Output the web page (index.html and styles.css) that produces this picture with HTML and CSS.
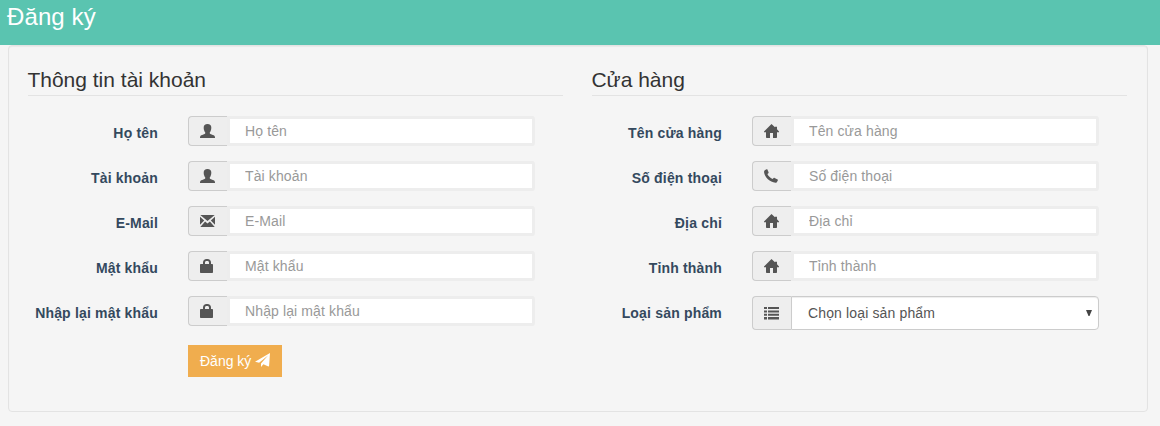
FILE: index.html
```html
<!DOCTYPE html>
<html lang="vi">
<head>
<meta charset="utf-8">
<title>Đăng ký</title>
<link rel="stylesheet" href="styles.css">
</head>
<body>
<svg class="sprite" aria-hidden="true">
  <symbol id="user" viewBox="0 0 15 14"><path d="M7.500 0C10 0 11.300 1.500 11.300 3.500c0 1.200-.1 1.900-.5 2.900-.3.900-.6 1.500-1 1.900v1.200c.2.500.9.700 1.900 1.100 1.600.6 2.800 1 3.100 1.900.2.500.2 1 .2 1.500H0c0-.5 0-1 .2-1.500.3-.9 1.500-1.300 3.100-1.900 1-.4 1.700-.6 1.900-1.100V8.300c-.4-.4-.7-1-1-1.900-.4-1-.5-1.700-.5-2.900C3.700 1.500 5 0 7.500 0z"/></symbol>
  <symbol id="mail" viewBox="0 0 15 14"><path d="M.3 1h14.400L7.500 7zM0 2.800l4.200 3.700L0 10.700zM15 2.800v7.900l-4.200-4.200zM5.100 7.500l2.400 2 2.400-2 4.800 5.500H.3z"/></symbol>
  <symbol id="lock" viewBox="0 0 15 14"><path fill-rule="evenodd" d="M3 5V3.500C3 1.300 4.500 0 6.500 0h1C9.500 0 11 1.300 11 3.500V5h1.200c.5 0 .8.3.8.800V13c0 .6-.4 1-1 1H1c-.6 0-1-.4-1-1V5.800C0 5.300.3 5 .8 5zm2 0h4V3.700C9 2.600 8.400 2 7.400 2h-.8C5.600 2 5 2.600 5 3.700z"/></symbol>
  <symbol id="home" viewBox="0 0 15 14"><path d="M7.500 0L11 3.300V2.800h2v2.500L15 7.400v.8h-2v5.100c0 .4-.3.700-.7.700H9V9H6v5H2.700c-.4 0-.7-.3-.7-.7V8.200H0v-.8z"/></symbol>
  <symbol id="phone" viewBox="0 0 15 14"><path d="M1.100 1L2.600.3c.3-.2.700 0 .8.300l1.200 2.700c.1.400 0 .7-.2.900l-1 .9c.8 1.900 2.900 3.900 5.100 4.900l1.200-1c.2-.2.600-.3.900-.1l3 1.500c.3.200.4.500.3.800l-.8 1.500c-.3.700-.9 1.200-1.600 1.100C5.800 13 .8 8.300.1 3.500 0 2.400.2 1.400 1.100 1z"/></symbol>
  <symbol id="list" viewBox="0 0 15 14"><path d="M0 1h3v2H0zm4 0h11v2H4zM0 4.400h3v2.100H0zm4 0h11v2.100H4zM0 7.700h3v2.100H0zm4 0h11v2.100H4zM0 11h3v2.500H0zm4 0h11v2.500H4z"/></symbol>
  <symbol id="send" viewBox="0 0 15 14"><path d="M15 0L0 8.700l4.100 1.100L13 2.500 6 10.500V14l2.400-2.700 5 2.100q.6 0 .7-.7z"/></symbol>
</svg>
<header class="topbar"><h1 class="title">Đăng ký</h1></header>
<form class="well">
  <section class="column">
    <h2 class="legend">Thông tin tài khoản</h2>
    <div class="row"><label class="label" for="name">Họ tên</label><div class="group"><span class="addon"><svg class="icon"><use href="#user"/></svg></span><input class="field" id="name" placeholder="Họ tên"></div></div>
    <div class="row"><label class="label" for="account">Tài khoản</label><div class="group"><span class="addon"><svg class="icon"><use href="#user"/></svg></span><input class="field" id="account" placeholder="Tài khoản"></div></div>
    <div class="row"><label class="label" for="email">E-Mail</label><div class="group"><span class="addon"><svg class="icon"><use href="#mail"/></svg></span><input class="field" id="email" placeholder="E-Mail"></div></div>
    <div class="row"><label class="label" for="pass">Mật khẩu</label><div class="group"><span class="addon"><svg class="icon"><use href="#lock"/></svg></span><input class="field" id="pass" type="password" placeholder="Mật khẩu"></div></div>
    <div class="row"><label class="label" for="pass2">Nhập lại mật khẩu</label><div class="group"><span class="addon"><svg class="icon"><use href="#lock"/></svg></span><input class="field" id="pass2" type="password" placeholder="Nhập lại mật khẩu"></div></div>
    <button class="submit" type="button">Đăng ký <svg class="icon"><use href="#send"/></svg></button>
  </section>
  <section class="column">
    <h2 class="legend">Cửa hàng</h2>
    <div class="row"><label class="label" for="shop">Tên cửa hàng</label><div class="group"><span class="addon"><svg class="icon"><use href="#home"/></svg></span><input class="field" id="shop" placeholder="Tên cửa hàng"></div></div>
    <div class="row"><label class="label" for="tel">Số điện thoại</label><div class="group"><span class="addon"><svg class="icon"><use href="#phone"/></svg></span><input class="field" id="tel" placeholder="Số điện thoại"></div></div>
    <div class="row"><label class="label" for="address">Địa chỉ</label><div class="group"><span class="addon"><svg class="icon"><use href="#home"/></svg></span><input class="field" id="address" placeholder="Địa chỉ"></div></div>
    <div class="row"><label class="label" for="city">Tỉnh thành</label><div class="group"><span class="addon"><svg class="icon"><use href="#home"/></svg></span><input class="field" id="city" placeholder="Tỉnh thành"></div></div>
    <div class="row"><label class="label" for="kind">Loại sản phẩm</label><div class="group group-select"><span class="addon"><svg class="icon"><use href="#list"/></svg></span><select class="select" id="kind"><option>Chọn loại sản phẩm</option></select><svg class="caret" viewBox="0 0 6 6"><path d="M0 0h6L3.500 6h-1z"/></svg></div></div>
  </section>
</form>
</body>
</html>
```
FILE: styles.css
```css
* { box-sizing: border-box; }
body {
  margin: 0;
  background: #f5f5f5;
  color: #333;
  font: 14px/20px "Liberation Sans", Arial, sans-serif;
}
.sprite { display: none; }
.topbar { height: 45px; padding: 3px 7px; background: #5ac4b0; }
.title { margin: 0; color: #fff; font-size: 24px; font-weight: 400; line-height: 28px; letter-spacing: .1px; }
.well {
  display: grid;
  grid-template-columns: 535px 535px;
  column-gap: 29px;
  width: 1140px;
  height: 367px;
  margin-left: 8px;
  padding: 19px;
  border: 1px solid #e3e3e3;
  border-radius: 4px;
  box-shadow: inset 0 1px 1px rgba(0, 0, 0, .05);
}
.legend {
  height: 31px;
  margin: 0 0 20px;
  border-bottom: 1px solid #e3e3e3;
  font-size: 21px;
  font-weight: 400;
  line-height: 30px;
  text-indent: -.6px;
}
.row { display: flex; align-items: flex-start; margin-bottom: 15px; }
.label {
  width: 130px;
  margin-right: 30px;
  padding-top: 7px;
  color: #34495e;
  font-weight: 700;
  letter-spacing: .18px;
  text-align: right;
  white-space: nowrap;
}
.group { display: flex; position: relative; width: 347px; height: 30px; }
.addon {
  flex: none;
  width: 39px;
  padding: 7px 0 0 11px;
  border: 1px solid #ccc;
  border-right: 0;
  border-radius: 4px 0 0 4px;
  background: #eee;
}
.icon { display: block; flex: none; width: 15px; height: 14px; fill: #555; }
.field {
  flex: 1;
  min-width: 0;
  padding: 0 15px;
  border: 3px solid #ededed;
  border-radius: 0 3px 3px 0;
  background: #fff;
  color: #555;
  font: inherit;
  letter-spacing: .12px;
}
.field::placeholder { color: #999; }
.group-select { height: 34px; }
.group-select .addon { padding-top: 9px; }
.select {
  flex: 1;
  padding: 0 16px;
  border: 1px solid #ccc;
  border-radius: 0 4px 4px 0;
  background: #fff;
  box-shadow: inset 0 1px 1px rgba(0, 0, 0, .075);
  color: #555;
  font: inherit;
  letter-spacing: .14px;
  appearance: none;
}
.caret { position: absolute; top: 14px; right: 7px; width: 6px; height: 6px; fill: #444; }
.submit {
  display: flex;
  align-items: center;
  gap: 4px;
  width: 94px;
  height: 32px;
  margin: 19px 0 0 160px;
  padding: 0 12px;
  border: 0;
  background: #f0ad4e;
  color: #fff;
  font: inherit;
  white-space: nowrap;
}
.submit .icon { margin-bottom: 2px; fill: #fff; }
```
